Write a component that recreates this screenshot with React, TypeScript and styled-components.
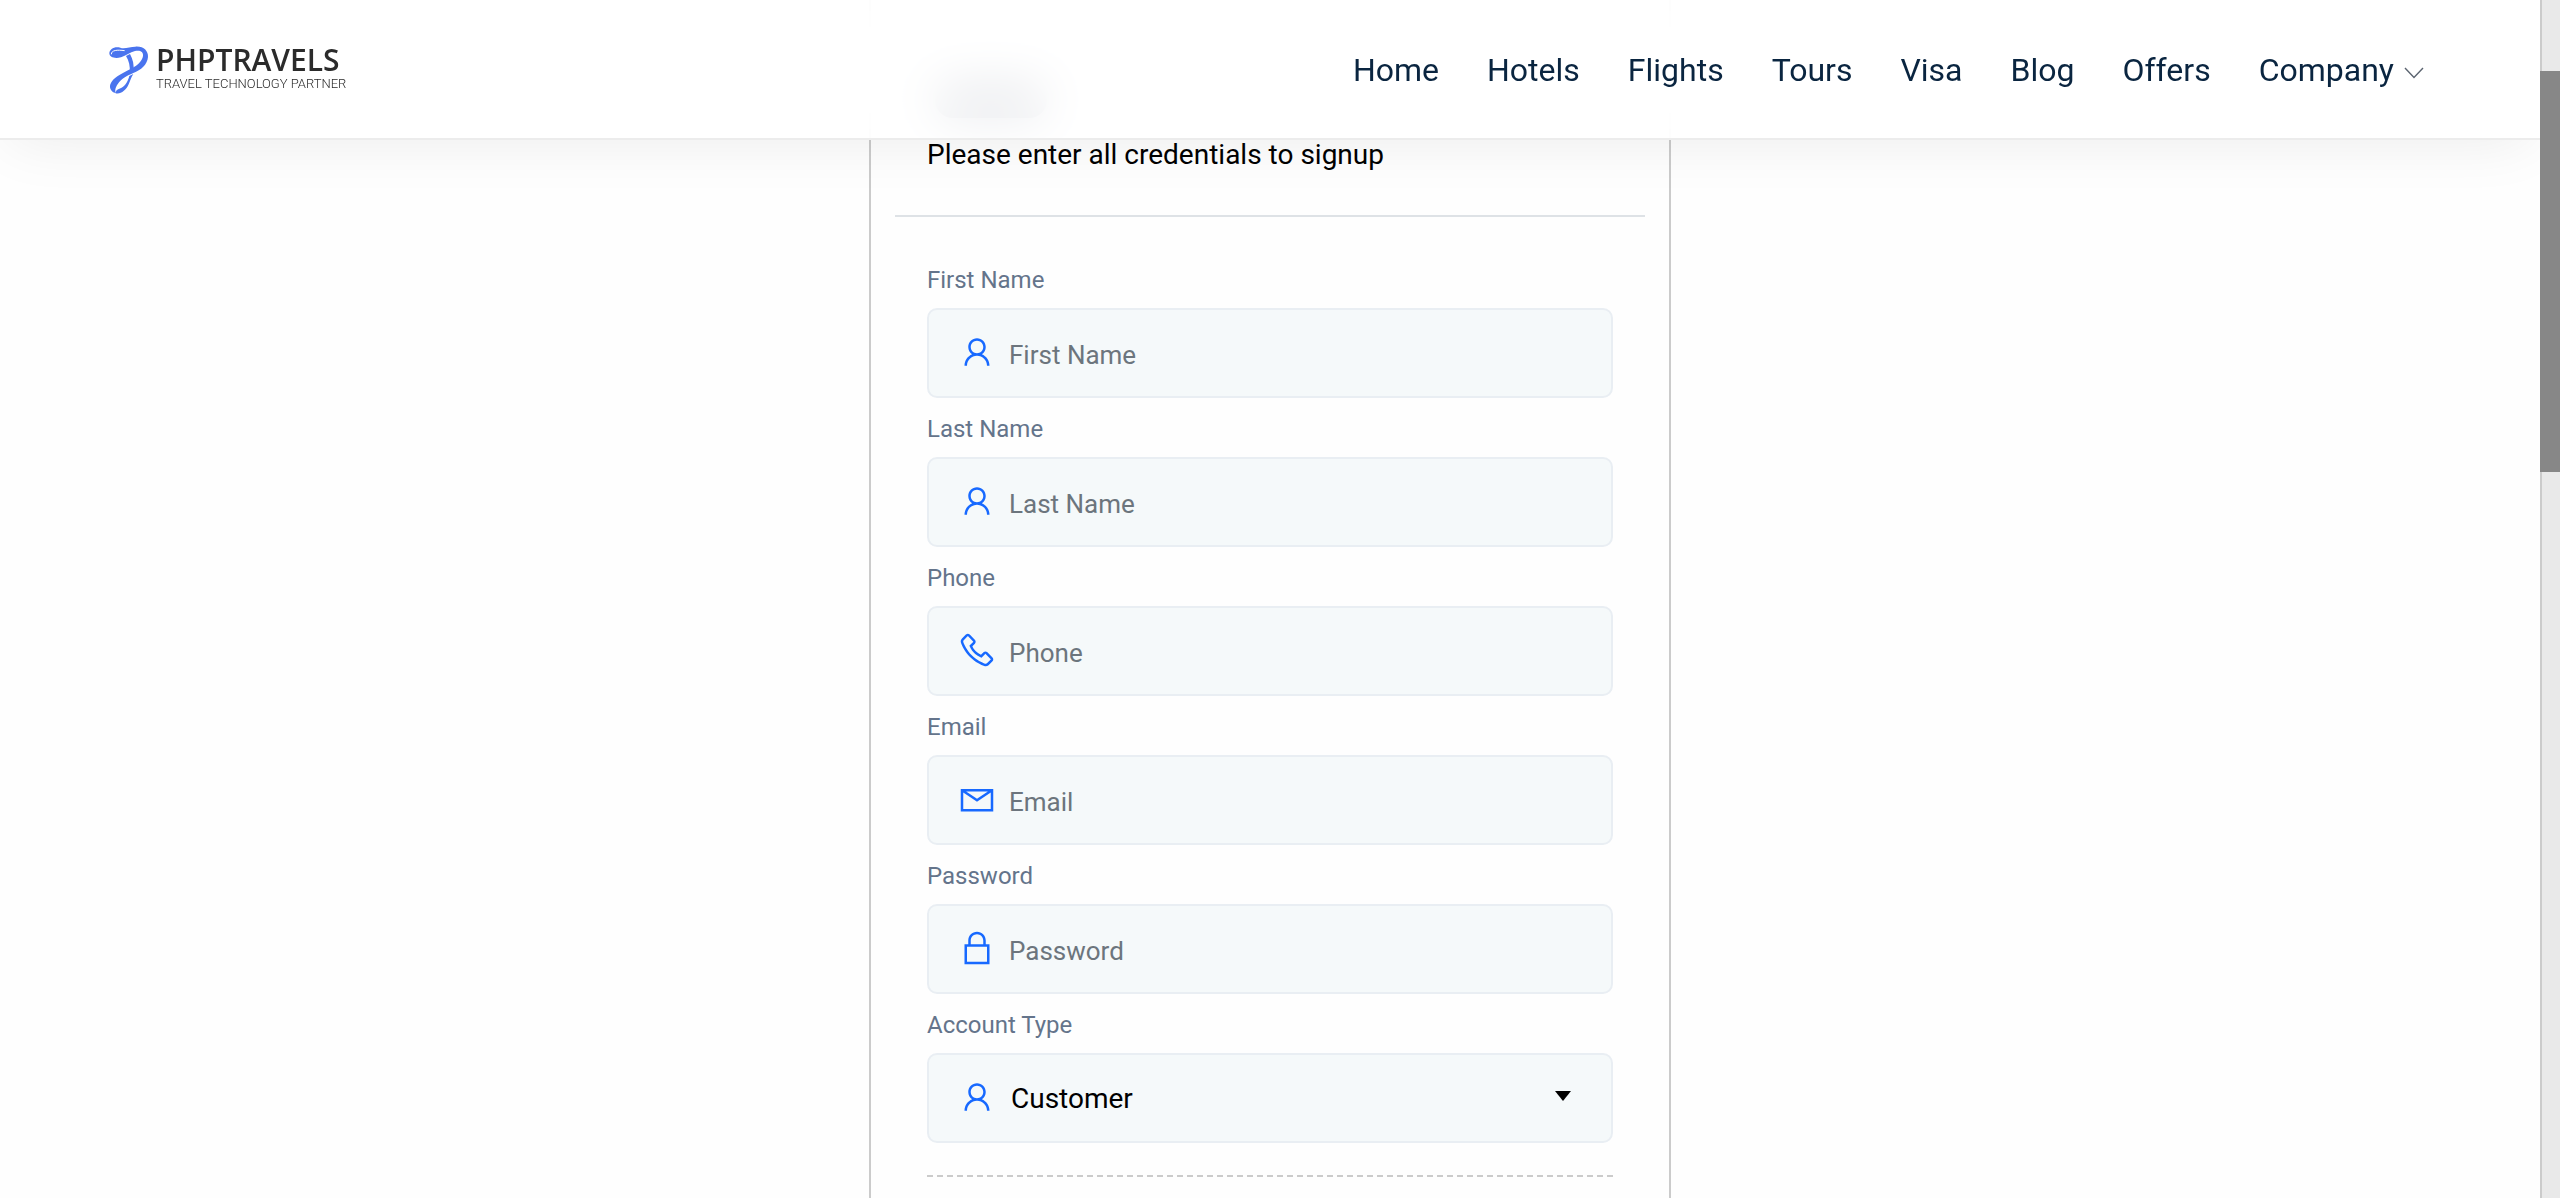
import React from "react";
import styled, { createGlobalStyle } from "styled-components";
import {
  LiaEnvelope,
  LiaLockSolid,
  LiaPhoneSolid,
  LiaUserSolid,
} from "react-icons/lia";
import type { IconType } from "react-icons";

const GlobalStyle = createGlobalStyle`
  *, *::before, *::after { box-sizing: border-box; }
  body {
    margin: 0;
    background: #fefefe;
    color: #000;
    font-family: Roboto, "Liberation Sans", sans-serif;
  }
`;

const Shell = styled.div`
  display: grid;
  grid-template-columns: minmax(0, 1fr) 20px;
  height: 100vh;
  overflow: hidden;
`;

const Page = styled.div`
  display: flex;
  flex-direction: column;
  min-height: 0;
  overflow: hidden;
`;

const Header = styled.header`
  position: relative;
  z-index: 1;
  flex: none;
  display: flex;
  align-items: center;
  justify-content: space-between;
  height: 140px;
  padding: 2px 116px 0 108px;
  border-bottom: 2px solid #ececec;
  background: rgba(255, 255, 255, 0.9);
  backdrop-filter: blur(24px);
  box-shadow: 0 10px 60px -10px rgba(0, 0, 0, 0.08);
`;

const Brand = styled.a`
  display: flex;
  align-items: center;
  gap: 6px;
  color: #2b2b2b;
  text-decoration: none;
`;

const BrandText = styled.span`
  display: flex;
  flex-direction: column;
`;

const BrandName = styled.span`
  font: 600 30px/28px "Open Sans", "Noto Sans", sans-serif;
`;

const BrandTag = styled.span`
  font: 300 13px/20px Roboto, "Liberation Sans", sans-serif;
`;

const Nav = styled.nav`
  display: flex;
  align-items: center;
  gap: 48px;
`;

const NavLink = styled.a`
  color: #0a2540;
  font-size: 32px;
  line-height: 40px;
  text-decoration: none;
`;

const NavButton = styled.button`
  display: flex;
  align-items: center;
  gap: 10px;
  padding: 0;
  border: 0;
  background: none;
  color: #0a2540;
  font: 32px/40px Roboto, "Liberation Sans", sans-serif;
`;

const Chevron = styled.svg`
  margin-top: 6px;
`;

const Main = styled.main`
  flex: 1 0 auto;
  display: flex;
  justify-content: center;
  margin-top: -140px;
`;

const Card = styled.section`
  width: 802px;
  max-width: 100%;
  padding: 0 24px;
  border: solid #cbcbcb;
  border-width: 0 2px;
`;

const CardHead = styled.div`
  padding: 82px 32px 40px;
  border-bottom: 2px solid #dee2e6;
`;

const CardTitle = styled.div`
  width: 112px;
  height: 36px;
  margin: 0 0 17px 8px;
  border-radius: 18px;
  background: #2c3a58;
`;

const Lead = styled.p`
  margin: 0;
  font-size: 28px;
  line-height: 40px;
`;

const Form = styled.form`
  display: flex;
  flex-direction: column;
  gap: 13px;
  padding: 45px 32px 0;
`;

const Field = styled.div`
  display: flex;
  flex-direction: column;
  gap: 10px;
`;

const Label = styled.label`
  color: #64748b;
  font-size: 24px;
  line-height: 36px;
`;

const Control = styled.div`
  display: grid;
  align-items: center;
  height: 90px;

  > * {
    grid-area: 1 / 1;
  }
`;

const FieldIcon = styled.span`
  display: flex;
  margin: 0 0 2px 30px;
  justify-self: start;
  color: #1769ff;
  font-size: 40px;
  pointer-events: none;
`;

const Input = styled.input`
  width: 100%;
  height: 100%;
  padding: 4px 80px 0;
  border: 2px solid #e9eef3;
  border-radius: 10px;
  background: #f5f9fa;
  color: #000;
  font: 26px Roboto, "Liberation Sans", sans-serif;

  &::placeholder {
    color: #6c757d;
    opacity: 1;
  }
`;

const Select = styled.select`
  appearance: none;
  width: 100%;
  height: 100%;
  padding: 0 82px;
  border: 2px solid #e9eef3;
  border-radius: 10px;
  background: #f5f9fa;
  color: #000;
  font: 28px Roboto, "Liberation Sans", sans-serif;
`;

const Caret = styled.span`
  justify-self: end;
  margin: 0 42px 4px 0;
  border: solid transparent;
  border-width: 10px 8px 0;
  border-top-color: #000;
  pointer-events: none;
`;

const Divider = styled.hr`
  width: 100%;
  margin: 19px 0 0;
  border: 0;
  border-top: 2px dashed #cbcbcb;
`;

const ScrollTrack = styled.div`
  display: grid;
  grid-template-rows: 71fr 401fr 726fr;
  background: linear-gradient(90deg, #cbcbcb 2px, #e9e9e9 2px);
`;

const ScrollThumb = styled.div`
  grid-row: 2;
  background: #878787;
`;

function Logo() {
  return (
    <svg width="42" height="50" viewBox="84 72 126 150" aria-hidden="true">
      <g fill="#4a74ee">
        <path d="M88 97C88 84 104 75 121 80C133 85 150 77 166 77C191 75 205 90 204 108C202 131 183 147 160 156C138 165 124 174 114 188C106 199 103 210 109 217C95 215 87 203 91 190C99 170 122 160 144 148C168 137 187 122 189 105C191 90 178 87 165 90C150 94 138 104 123 109C105 114 88 109 88 97Z" />
        <path d="M138 105L150 99C159 116 163 134 160 150L149 154C151 136 147 119 138 105Z" />
        <path d="M107 217C122 221 138 208 146 190C151 178 154 168 160 159L148 165C143 184 133 199 118 203C111 205 107 209 107 217Z" />
      </g>
      <path
        d="M94 100C94 87 112 86 134 89"
        fill="none"
        stroke="#fff"
        strokeWidth="3"
      />
    </svg>
  );
}

const links = ["Home", "Hotels", "Flights", "Tours", "Visa", "Blog", "Offers"];

const fields: { id: string; label: string; type: string; icon: IconType }[] = [
  { id: "first-name", label: "First Name", type: "text", icon: LiaUserSolid },
  { id: "last-name", label: "Last Name", type: "text", icon: LiaUserSolid },
  { id: "phone", label: "Phone", type: "tel", icon: LiaPhoneSolid },
  { id: "email", label: "Email", type: "email", icon: LiaEnvelope },
  { id: "password", label: "Password", type: "password", icon: LiaLockSolid },
];

export default function App() {
  return (
    <>
      <GlobalStyle />
      <Shell>
        <Page>
          <Header>
            <Brand href="#">
              <Logo />
              <BrandText>
                <BrandName>PHPTRAVELS</BrandName>
                <BrandTag>TRAVEL TECHNOLOGY PARTNER</BrandTag>
              </BrandText>
            </Brand>
            <Nav>
              {links.map((name) => (
                <NavLink key={name} href="#">
                  {name}
                </NavLink>
              ))}
              <NavButton type="button">
                Company
                <Chevron width="20" height="12" viewBox="0 0 20 12" aria-hidden="true">
                  <path d="M1 1L10 10.5L19 1" fill="none" stroke="#5b6470" strokeWidth="1.4" />
                </Chevron>
              </NavButton>
            </Nav>
          </Header>
          <Main>
            <Card>
              <CardHead>
                <CardTitle aria-hidden="true" />
                <Lead>Please enter all credentials to signup</Lead>
              </CardHead>
              <Form>
                {fields.map(({ id, label, type, icon: Icon }) => (
                  <Field key={id}>
                    <Label htmlFor={id}>{label}</Label>
                    <Control>
                      <Input id={id} type={type} placeholder={label} />
                      <FieldIcon>
                        <Icon />
                      </FieldIcon>
                    </Control>
                  </Field>
                ))}
                <Field>
                  <Label htmlFor="account-type">Account Type</Label>
                  <Control>
                    <Select id="account-type" defaultValue="Customer">
                      <option>Customer</option>
                    </Select>
                    <FieldIcon>
                      <LiaUserSolid />
                    </FieldIcon>
                    <Caret />
                  </Control>
                </Field>
                <Divider />
              </Form>
            </Card>
          </Main>
        </Page>
        <ScrollTrack aria-hidden="true">
          <ScrollThumb />
        </ScrollTrack>
      </Shell>
    </>
  );
}
